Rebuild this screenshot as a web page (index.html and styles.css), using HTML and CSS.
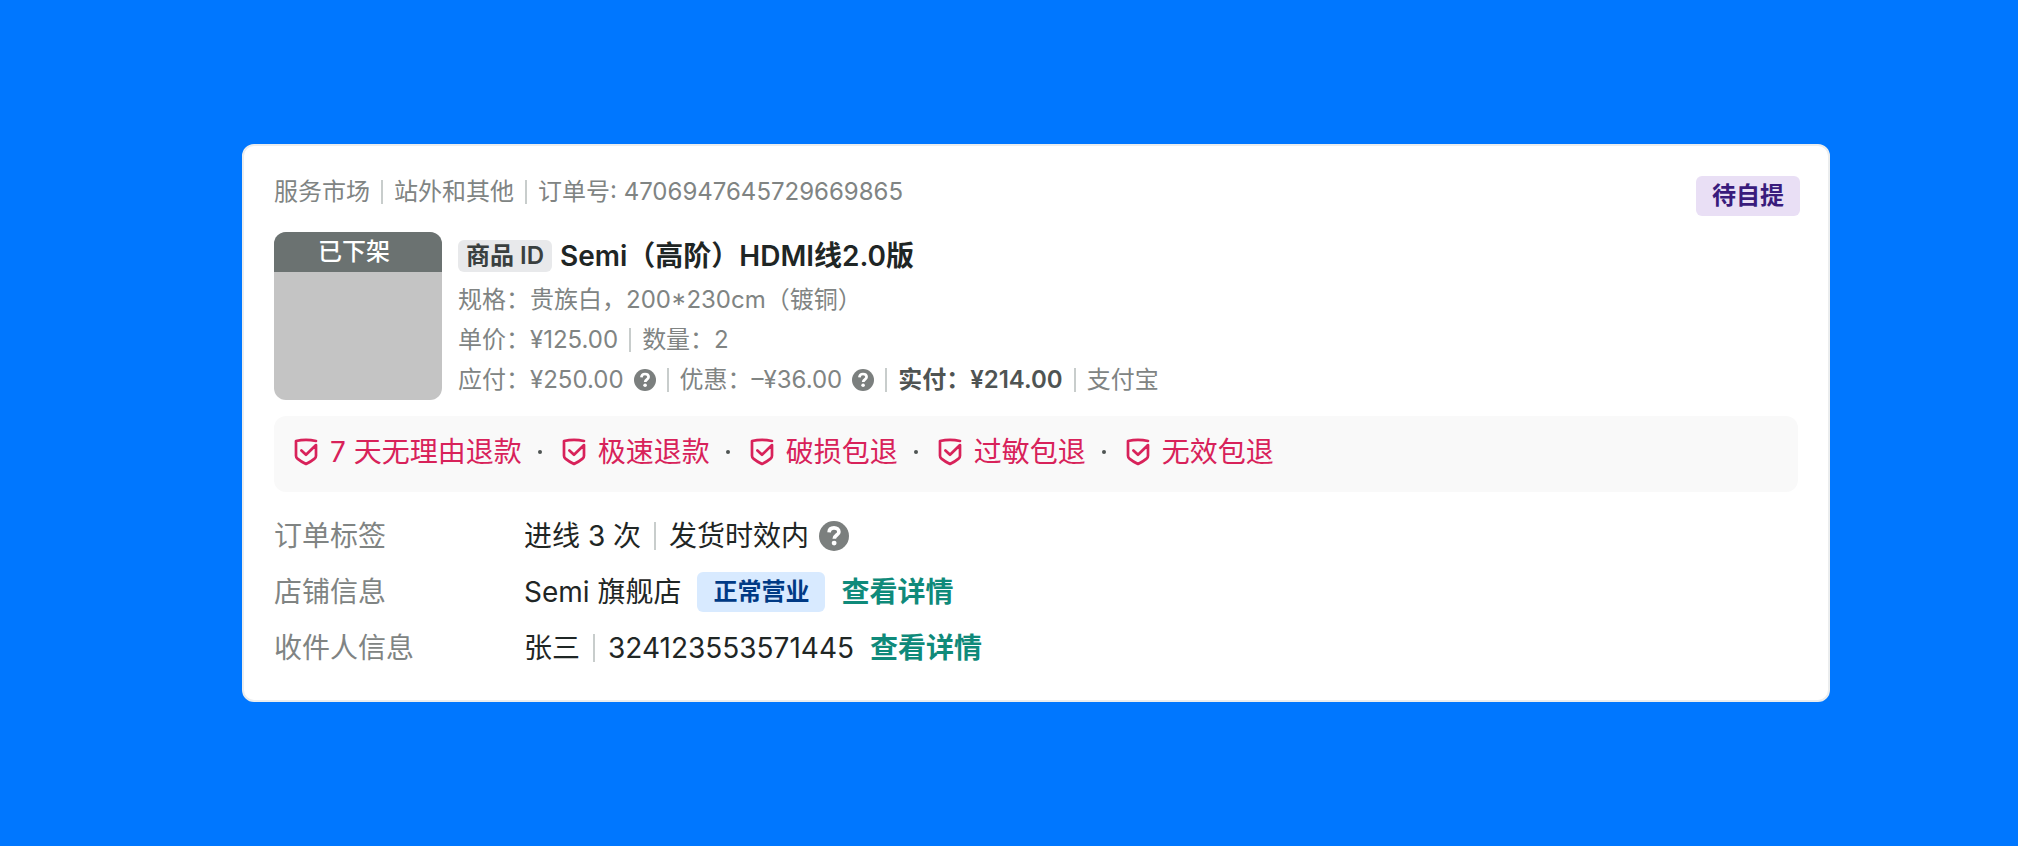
FILE: index.html
```
<!DOCTYPE html>
<html lang="zh-CN">
<head>
  <meta charset="UTF-8">
  <meta name="viewport" content="width=device-width, initial-scale=1.0">
  <title>订单卡片</title>
  <link rel="stylesheet" href="styles.css">
</head>
<body>

<!-- 图标 -->
<svg class="sprite" aria-hidden="true">
  <symbol id="icon-help" viewBox="0 0 22 22">
    <circle cx="11" cy="11" r="11" fill="currentColor"/>
    <path d="M7.4 8.4C7.5 6.2 9 5 11 5c2.100 0 3.600 1.200 3.600 3 0 2.300-3.400 2.400-3.400 5.100" fill="none" stroke="#fff" stroke-width="2.700"/>
    <circle cx="11.100" cy="16.200" r="1.800" fill="#fff"/>
  </symbol>
  <symbol id="icon-shield" viewBox="0 0 32 32">
    <path d="M26 5Q16 2.600 6 5V19.800Q6 21.600 7.400 22.600Q11 25.600 16 28Q21 25.600 24.600 22.600Q26 21.600 26 19.800V9L16 18.800L11.400 14.400" fill="none" stroke="currentColor" stroke-width="2.700" stroke-linejoin="round" stroke-linecap="round"/>
  </symbol>
</svg>

<main class="card">
  <header class="card-header">
    <div class="meta">
      <span>服务市场</span><i class="divider"></i><span>站外和其他</span><i class="divider"></i><span>订单号: 4706947645729669865</span>
    </div>
    <span class="tag tag-violet">待自提</span>
  </header>

  <!-- 商品 -->
  <section class="goods">
    <div class="goods-pic"><span class="goods-state">已下架</span></div>
    <div class="goods-detail">
      <h1 class="goods-title"><span class="chip">商品 ID</span>Semi（高阶）HDMI线2.0版</h1>
      <p class="goods-row">规格：贵族白，200*230cm（镀铜）</p>
      <p class="goods-row">单价：¥125.00<i class="divider"></i>数量：2</p>
      <p class="goods-row">
        应付：¥250.00<button class="help" type="button" aria-label="应付说明"><svg><use href="#icon-help"/></svg></button><i class="divider"></i>优惠：–¥36.00<button class="help" type="button" aria-label="优惠说明"><svg><use href="#icon-help"/></svg></button><i class="divider"></i><strong>实付：¥214.00</strong><i class="divider"></i>支付宝
      </p>
    </div>
  </section>

  <!-- 服务保障 -->
  <ul class="services">
    <li><svg class="shield"><use href="#icon-shield"/></svg>7 天无理由退款</li>
    <li><svg class="shield"><use href="#icon-shield"/></svg>极速退款</li>
    <li><svg class="shield"><use href="#icon-shield"/></svg>破损包退</li>
    <li><svg class="shield"><use href="#icon-shield"/></svg>过敏包退</li>
    <li><svg class="shield"><use href="#icon-shield"/></svg>无效包退</li>
  </ul>

  <dl class="info">
    <dt>订单标签</dt>
    <dd>进线 3 次<i class="divider"></i>发货时效内<button class="help" type="button" aria-label="时效说明"><svg><use href="#icon-help"/></svg></button></dd>
    <dt>店铺信息</dt>
    <dd>Semi 旗舰店<span class="tag tag-blue">正常营业</span><a href="#">查看详情</a></dd>
    <dt>收件人信息</dt>
    <dd>张三<i class="divider"></i>324123553571445<a href="#">查看详情</a></dd>
  </dl>
</main>

</body>
</html>
```

FILE: styles.css
```
* {
  box-sizing: border-box;
}
body {
  margin: 0;
  padding: 144px 188px 144px 242px;
  background-color: #0077ff;
  color: #1f2625;
  font-family: Inter, "Noto Sans CJK SC", sans-serif;
  font-size: 24px;
  line-height: 40px;
}
h1, p, ul, dl, dd {
  margin: 0;
  padding: 0;
}
.sprite {
  display: none;
}
.card {
  padding: 30px 28px 32px 30px;
  background-color: #fff;
  border: 2px solid #ebedee;
  border-radius: 12px;
}
.card-header {
  display: flex;
  justify-content: space-between;
  align-items: flex-start;
  margin-bottom: 16px;
}
.meta {
  display: flex;
  align-items: center;
  line-height: 32px;
  color: #808483;
}
.divider {
  flex: none;
  width: 2px;
  height: 24px;
  margin: 0 11px;
  background-color: #c8cdcc;
}
.tag {
  padding: 0 16px;
  border-radius: 6px;
  font-size: 24px;
  font-weight: 600;
}
.tag-violet {
  background-color: #e9dff5;
  color: #391b7c;
}
.tag-blue {
  margin-left: 16px;
  background-color: #d8eaff;
  color: #003a85;
}

/* 商品 */
.goods {
  display: flex;
  gap: 16px;
  margin-bottom: 16px;
}
.goods-pic {
  flex: none;
  width: 168px;
  height: 168px;
  border-radius: 12px;
  overflow: hidden;
  background-color: #c4c4c4;
}
.goods-state {
  display: block;
  padding-right: 8px;
  background-color: #6b7271;
  color: #fff;
  text-align: center;
  font-weight: 500;
}
.goods-title {
  display: flex;
  align-items: center;
  height: 48px;
  font-size: 28px;
  font-weight: 600;
}
.chip {
  margin-right: 8px;
  padding: 0 8px;
  border-radius: 6px;
  background-color: #e8e9eb;
  color: #3a403f;
  font-size: 24px;
  font-weight: 600;
  line-height: 32px;
}
.goods-row {
  display: flex;
  align-items: center;
  color: #808483;
}
.goods-row strong {
  color: #4f5453;
  font-weight: 600;
}
.help {
  display: flex;
  width: 22px;
  height: 22px;
  margin-left: 10px;
  padding: 0;
  border: 0;
  background: none;
  color: #7b7f7e;
  cursor: pointer;
}
.help svg {
  width: 100%;
  height: 100%;
}

/* 服务保障 */
.services {
  display: flex;
  margin-right: 2px;
  padding: 16px 16px 20px;
  border-radius: 12px;
  background-color: #f9f9f9;
  color: #d8225a;
  font-size: 28px;
  list-style: none;
}
.services li {
  display: flex;
  align-items: center;
}
.services li + li::before {
  content: "";
  width: 4px;
  height: 4px;
  margin: 0 16px;
  border-radius: 50%;
  background-color: #4f5453;
}
.shield {
  width: 32px;
  height: 32px;
  margin-right: 8px;
}

/* 订单信息 */
.info {
  display: grid;
  grid-template-columns: 250px 1fr;
  row-gap: 16px;
  margin-top: 24px;
  font-size: 28px;
}
.info dt {
  color: #808483;
}
.info dd {
  display: flex;
  align-items: center;
}
.info .divider {
  height: 28px;
  margin: 0 13px;
}
.info .help {
  width: 30px;
  height: 30px;
}
.info a {
  margin-left: 16px;
  color: #0f8a7a;
  font-weight: 600;
  text-decoration: none;
}
```
